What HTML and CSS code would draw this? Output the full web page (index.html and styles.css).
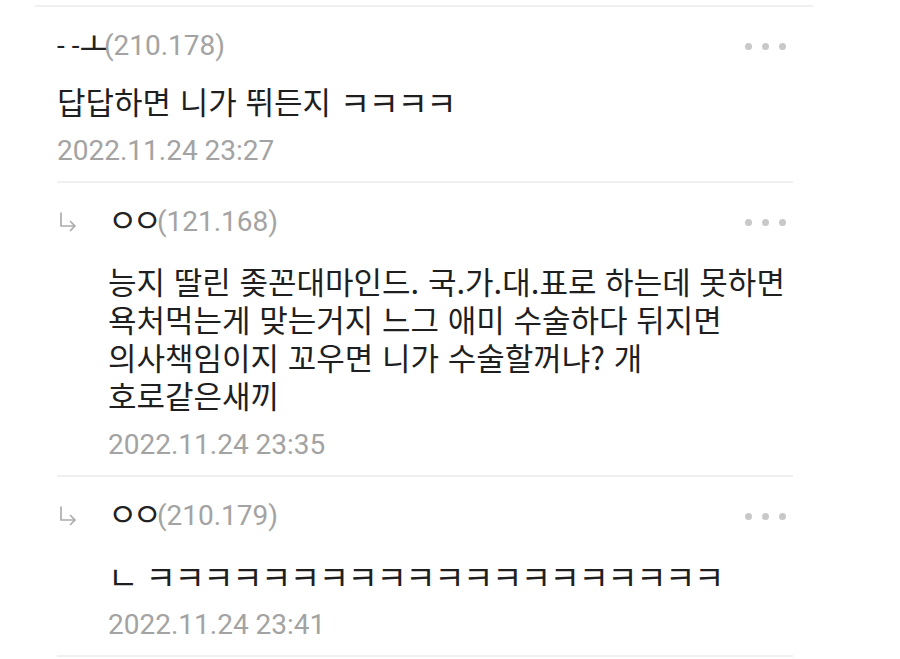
FILE: index.html
```html
<!DOCTYPE html>
<html lang="ko">
<head>
<meta charset="utf-8">
<title>댓글</title>
<link rel="stylesheet" href="styles.css">
</head>
<body>
<main class="list">
  <div class="top-rule"></div>

  <article class="comment">
    <div class="content">
      <div class="head">
        <span class="name">- -<span class="jamo-name">ㅗ</span><span class="ip">(210.178)</span></span>
        <span class="more"><i></i><i></i><i></i></span>
      </div>
      <p class="body">답답하면 니가 뛰든지 <span class="jamo">ㅋㅋㅋㅋ</span></p>
      <div class="date">2022.11.24 23:27</div>
    </div>
  </article>

  <article class="comment reply">
    <span class="arrow"><svg width="20" height="22" viewBox="0 0 20 22"><path d="M3 2 V15 H17 M12.5 10.5 L17 15 L12.5 19.5" fill="none" stroke="#acacac" stroke-width="1.7" stroke-linecap="round" stroke-linejoin="round"/></svg></span>
    <div class="content">
      <div class="head">
        <span class="name"><span class="jamo-name">ㅇㅇ</span><span class="ip">(121.168)</span></span>
        <span class="more"><i></i><i></i><i></i></span>
      </div>
      <p class="body">능지 딸린 좆꼰대마인드. 국.가.대.표로 하는데 못하면<br>욕처먹는게 맞는거지 느그 애미 수술하다 뒤지면<br>의사책임이지 꼬우면 니가 수술할꺼냐? 개<br>호로같은새끼</p>
      <div class="date">2022.11.24 23:35</div>
    </div>
  </article>

  <article class="comment reply">
    <span class="arrow"><svg width="20" height="22" viewBox="0 0 20 22"><path d="M3 2 V15 H17 M12.5 10.5 L17 15 L12.5 19.5" fill="none" stroke="#acacac" stroke-width="1.7" stroke-linecap="round" stroke-linejoin="round"/></svg></span>
    <div class="content">
      <div class="head">
        <span class="name"><span class="jamo-name">ㅇㅇ</span><span class="ip">(210.179)</span></span>
        <span class="more"><i></i><i></i><i></i></span>
      </div>
      <p class="body"><span class="jamo">ㄴ</span> <span class="jamo">ㅋㅋㅋㅋㅋㅋㅋㅋㅋㅋㅋㅋㅋㅋㅋㅋㅋㅋㅋㅋ</span></p>
      <div class="date">2022.11.24 23:41</div>
    </div>
  </article>
</main>
</body>
</html>
```

FILE: styles.css
```css
* { box-sizing: border-box; }

html, body {
  margin: 0;
  padding: 0;
  background: #ffffff;
}

body {
  font-family: Roboto, "Noto Sans CJK KR", sans-serif;
  color: #222222;
  width: 900px;
  height: 659px;
  overflow: hidden;
}

.list {
  padding-top: 5px;
}

.top-rule {
  margin-left: 35px;
  width: 778px;
  height: 2px;
  background: #f0f0f0;
}

.comment {
  margin-left: 57px;
  width: 736px;
  display: flex;
  border-bottom: 2px solid #f0f0f0;
  padding: 20px 7px 11px 0;
}

.content {
  flex: 1;
  min-width: 0;
}

.arrow {
  width: 51px;
  flex: none;
  height: 38px;
  display: flex;
  align-items: center;
  padding-left: 1px;
}

.arrow svg {
  display: block;
}

.head {
  display: flex;
  align-items: center;
  justify-content: space-between;
  height: 38px;
}

.name {
  font-size: 28px;
  line-height: 38px;
  color: #222222;
}

.jamo-name {
  font-family: "Noto Sans CJK KR", sans-serif;
  font-size: 32px;
  line-height: 0;
  letter-spacing: -5px;
  vertical-align: -1px;
  color: #222222;
}

.ip {
  color: #a3a3a3;
}

.more {
  display: flex;
  gap: 10px;
}

.more i {
  width: 7px;
  height: 7px;
  border-radius: 50%;
  background: #c8c8c8;
}

.body {
  margin: 17px 0 0;
  font-family: "Noto Sans CJK KR", Roboto, sans-serif;
  font-size: 31px;
  line-height: 38px;
  white-space: nowrap;
  color: #1f1f1f;
}

.jamo {
  font-size: 33px;
  line-height: 0;
  letter-spacing: -1.5px;
  vertical-align: -2px;
}

.reply .body {
  margin-top: 21px;
}

.date {
  margin-top: 12px;
  font-size: 28px;
  line-height: 38px;
  color: #a3a3a3;
}
```
